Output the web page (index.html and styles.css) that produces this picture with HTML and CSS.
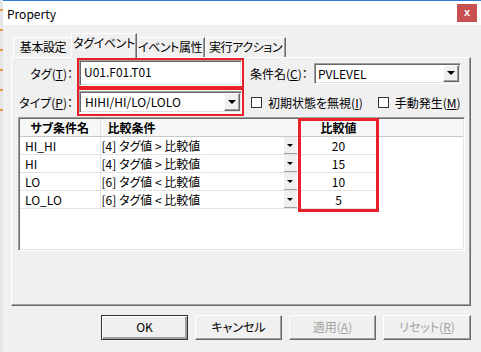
FILE: index.html
```html
<!DOCTYPE html>
<html>
<head>
<meta charset="UTF-8">
<title>Property</title>
<link rel="stylesheet" href="styles.css">
</head>
<body>
<div class="desk">
    <div class="behind"></div>
    <div class="window">
        <div class="titlebar">
            <span class="title">Property</span>
            <span class="close">x</span>
        </div>
        <div class="content">
            <div class="tabs">
                <span class="tab t1">基本設定</span>
                <span class="tab t2 active">タグイベント</span>
                <span class="tab t3">イベント属性</span>
                <span class="tab t4">実行アクション</span>
            </div>
            <div class="panel">
                <div class="top">
                    <span class="lbl">タグ(<u>T</u>)：</span>
                    <div class="mark mark-tag">
                        <div class="edit">U01.F01.T01</div>
                    </div>
                    <div class="right">
                        <span class="lbl2">条件名(<u>C</u>)：</span>
                        <div class="combo combo-cond"><span class="val">PVLEVEL</span><span class="dd"></span></div>
                    </div>
                    <span class="lbl">タイプ(<u>P</u>)：</span>
                    <div class="mark mark-type">
                        <div class="combo combo-type"><span class="val">HIHI/HI/LO/LOLO</span><span class="dd"></span></div>
                    </div>
                    <div class="right checks">
                        <span class="check c1"><span class="box"></span>初期状態を無視(<u>I</u>)</span>
                        <span class="check c2"><span class="box"></span>手動発生(<u>M</u>)</span>
                    </div>
                </div>
                <div class="list">
                    <table>
                        <colgroup>
                            <col class="w1"><col class="w2"><col class="w3"><col>
                        </colgroup>
                        <tr>
                            <th class="h1">サブ条件名</th>
                            <th class="h2">比較条件</th>
                            <th class="h3">比較値</th>
                            <th class="h4"></th>
                        </tr>
                        <tr>
                            <td class="name">HI_HI</td>
                            <td><div class="cond"><span>[4] タグ値 &gt; 比較値</span><span class="cd"></span></div></td>
                            <td class="num">20</td>
                            <td class="empty"></td>
                        </tr>
                        <tr>
                            <td class="name">HI</td>
                            <td><div class="cond"><span>[4] タグ値 &gt; 比較値</span><span class="cd"></span></div></td>
                            <td class="num">15</td>
                            <td class="empty"></td>
                        </tr>
                        <tr>
                            <td class="name">LO</td>
                            <td><div class="cond"><span>[6] タグ値 &lt; 比較値</span><span class="cd"></span></div></td>
                            <td class="num">10</td>
                            <td class="empty"></td>
                        </tr>
                        <tr>
                            <td class="name">LO_LO</td>
                            <td><div class="cond"><span>[6] タグ値 &lt; 比較値</span><span class="cd"></span></div></td>
                            <td class="num">5</td>
                            <td class="empty"></td>
                        </tr>
                    </table>
                    <div class="mark-col"></div>
                </div>
            </div>
            <div class="buttons">
                <span class="btn default">OK</span>
                <span class="btn">キャンセル</span>
                <span class="btn disabled">適用(<u>A</u>)</span>
                <span class="btn disabled last">リセット(<u>R</u>)</span>
            </div>
        </div>
    </div>
</div>
</body>
</html>
```

FILE: styles.css
```css
body {
    margin: 0;
    width: 481px;
    height: 352px;
    overflow: hidden;
    background: #f0f0f0;
    font-family: "Noto Sans CJK JP", "Noto Sans", sans-serif;
    font-size: 12px;
    font-feature-settings: "palt";
    color: #000;
}
.desk {
    display: flex;
    height: 352px;
}
.behind {
    width: 3px;
    background: repeating-linear-gradient(to bottom, #e6e6e6 0 9px, #e39a3c 9px 11px, #e6e6e6 11px 20px) no-repeat 0 0 / 3px 122px, #e6e6e6;
}
.window {
    flex: 1;
    display: flex;
    flex-direction: column;
    background: #f0f0f0;
    border-top: 1px solid #2b7fd2;
}
.titlebar {
    height: 24px;
    background: #fff;
    display: flex;
    align-items: center;
    justify-content: space-between;
    padding: 0 4px;
}
.title {
    font-size: 12px;
}
.close {
    width: 20px;
    height: 18px;
    background: #c75050;
    color: #fff;
    font-family: "Liberation Sans", sans-serif;
    font-weight: bold;
    font-size: 11px;
    line-height: 17px;
    text-align: center;
}
.content {
    padding: 0 10px 0 8px;
}
.tabs {
    display: flex;
    align-items: flex-end;
    height: 32px;
    padding-left: 2px;
}
.tab {
    position: relative;
    box-sizing: border-box;
    height: 20px;
    line-height: 18px;
    text-align: center;
    white-space: nowrap;
    letter-spacing: -0.4px;
    background: #f0f0f0;
    border: 1px solid;
    border-bottom: none;
    border-color: #fff #696969 transparent #fff;
    box-shadow: inset -1px 0 #a0a0a0;
}
.t1 { width: 60px; }
.t2 { width: 66px; }
.t3 { width: 70px; }
.t4 { width: 81px; }
.tab.active {
    height: 25px;
    margin: 0 -2px -1px;
    z-index: 1;
}
.panel {
    box-sizing: border-box;
    width: 460px;
    height: 249px;
    border: 1px solid;
    border-color: #fff #696969 #696969 #fff;
    box-shadow: inset -1px -1px #a0a0a0;
}
.top {
    display: grid;
    grid-template-columns: 65px 167px 1fr;
    grid-template-rows: 30px 28px;
}
.lbl {
    display: flex;
    align-items: center;
    justify-content: flex-end;
    padding-right: 4px;
}
.mark {
    border: 2px solid #e8202a;
}
.edit {
    box-sizing: border-box;
    height: 26px;
    line-height: 22px;
    padding-left: 4px;
    background: #fff;
    border: 1px solid;
    border-color: #a0a0a0 #fff #fff #a0a0a0;
    box-shadow: inset 1px 1px #696969, inset -1px -1px #e3e3e3;
}
.right {
    display: flex;
    align-items: center;
    padding-left: 6px;
}
.lbl2 {
    width: 64px;
}
.combo {
    box-sizing: border-box;
    display: flex;
    padding: 1px;
    background: #fff;
    border: 1px solid;
    border-color: #a0a0a0 #fff #fff #a0a0a0;
    box-shadow: inset 1px 1px #696969, inset -1px -1px #e3e3e3;
}
.combo-cond {
    width: 147px;
    height: 21px;
}
.combo-type {
    height: 22px;
    margin: 1px 0;
}
.val {
    flex: 1;
    padding-left: 2px;
    line-height: 17px;
}
.combo-type .val {
    padding-left: 4px;
    line-height: 18px;
}
.dd {
    width: 16px;
    display: flex;
    align-items: center;
    justify-content: center;
    background: #f0f0f0;
    box-sizing: border-box;
    border: 1px solid;
    border-color: #fff #696969 #696969 #fff;
    box-shadow: inset -1px -1px #a0a0a0;
}
.dd::after {
    content: "";
    border-left: 4px solid transparent;
    border-right: 4px solid transparent;
    border-top: 4px solid #000;
}
.check {
    display: flex;
    align-items: center;
}
.box {
    width: 11px;
    height: 11px;
    box-sizing: border-box;
    border: 1px solid #333;
    background: #fff;
    margin-right: 6px;
}
.c1 { margin-left: 1px; }
.c2 { margin-left: 15px; }
.list {
    position: relative;
    box-sizing: border-box;
    margin: 1px 5px 0 6px;
    height: 134px;
    padding: 1px;
    background: #fff;
    border: 1px solid;
    border-color: #a0a0a0 #fff #fff #a0a0a0;
    box-shadow: inset 1px 1px #696969, inset -1px -1px #e3e3e3;
}
table {
    width: 100%;
    border-collapse: collapse;
    table-layout: fixed;
}
.w1 { width: 80px; }
.w2 { width: 199px; }
.w3 { width: 79px; }
th {
    height: 17px;
    padding: 0;
    font-weight: bold;
    background: #f7f7f7;
    border-bottom: 1px solid #c8c8c8;
    border-right: 1px solid #e3e3e3;
    line-height: 17px;
}
.h2 {
    text-align: left;
    padding-left: 7px;
}
.h4 {
    border-right: none;
}
td {
    height: 17px;
    padding: 0;
    line-height: 17px;
    border-bottom: 1px solid #e3e3e3;
    border-right: 1px solid #e3e3e3;
    white-space: nowrap;
}
td.name {
    padding-left: 5px;
}
td.num {
    text-align: center;
}
td.empty {
    border: none;
}
.cond {
    display: flex;
    justify-content: space-between;
    height: 17px;
    padding-left: 1px;
}
.cd {
    width: 13px;
    margin-right: 2px;
    box-sizing: border-box;
    background: #f0f0f0;
    border-bottom: 1px solid #a0a0a0;
    display: flex;
    align-items: center;
    justify-content: center;
}
.cd::after {
    content: "";
    border-left: 3px solid transparent;
    border-right: 3px solid transparent;
    border-top: 3px solid #000;
}
.mark-col {
    position: absolute;
    left: 279px;
    top: 0;
    width: 81px;
    height: 94px;
    box-sizing: border-box;
    border: 3px solid #e8202a;
}
.buttons {
    display: flex;
    justify-content: flex-end;
    gap: 7px;
    margin-top: 9px;
}
.btn {
    box-sizing: border-box;
    width: 87px;
    height: 25px;
    line-height: 22px;
    text-align: center;
    background: #f0f0f0;
    border: 1px solid;
    border-color: #fff #696969 #696969 #fff;
    box-shadow: inset -1px -1px #a0a0a0;
}
.btn.default {
    border-color: #333;
    box-shadow: inset 1px 1px #fff, inset -2px -2px #a0a0a0;
}
.btn.disabled {
    color: #a3a3a3;
}
.btn.last {
    width: 88px;
}
```
